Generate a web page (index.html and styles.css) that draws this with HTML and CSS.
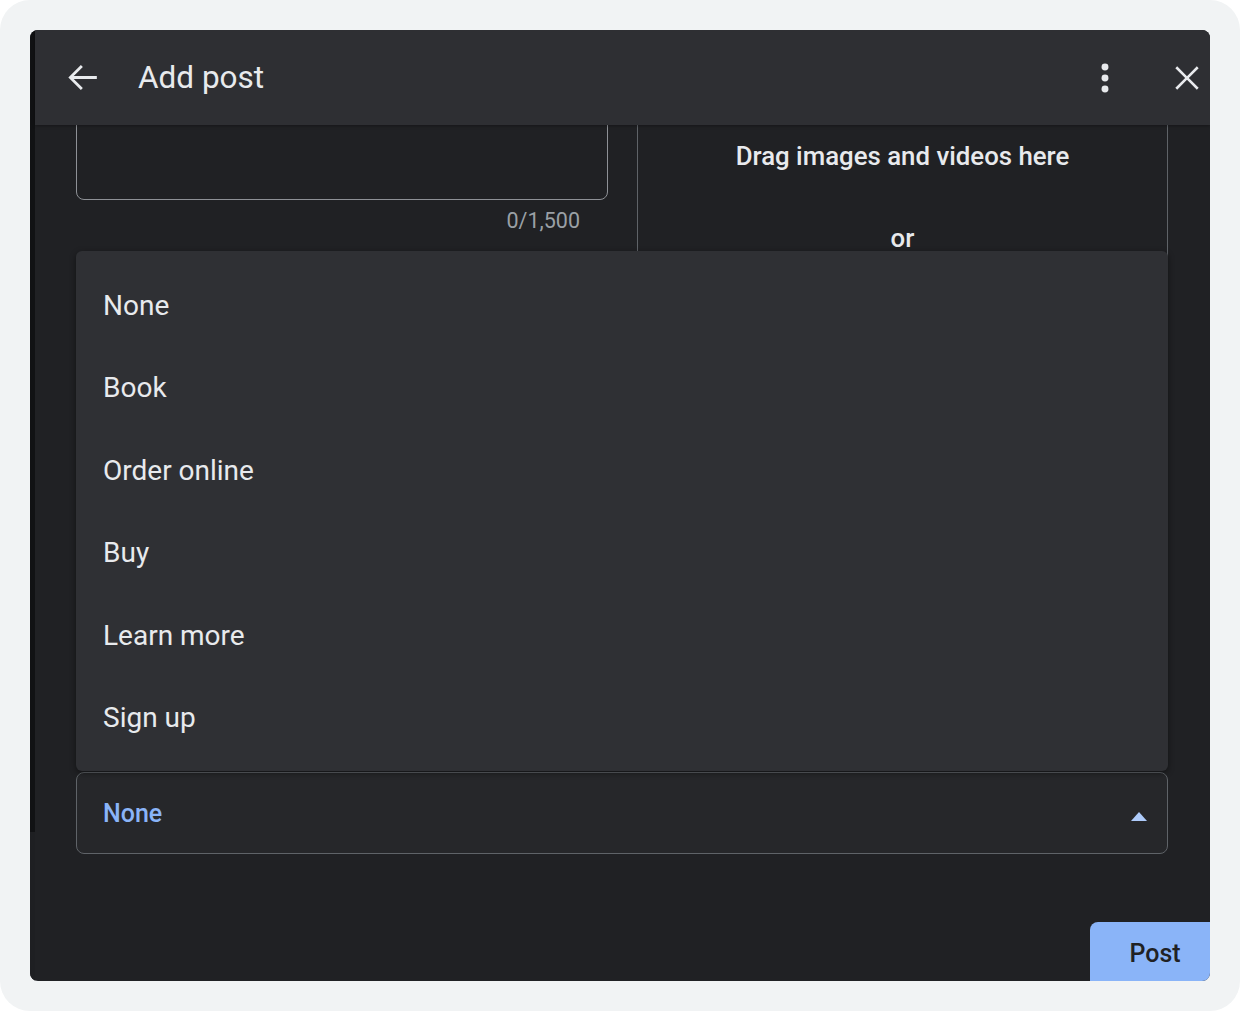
FILE: index.html
```html
<!DOCTYPE html>
<html lang="en">
    <head>
        <meta charset="UTF-8">
        <meta name="viewport" content="width=device-width, initial-scale=1.0">
        <title>Add post</title>
        <link rel="stylesheet" href="styles.css">
    </head>
    <body>
        <div class="frame">
            <div class="screen">
                <div class="page-edge"></div>

                <div class="dialog">
                    <div class="header">
                        <button class="icon-btn back" aria-label="Back">
                            <svg viewBox="0 0 24 24" width="43" height="43"><path d="M20 11.2H7.1l5.1-5.1-1.1-1.1L4.1 12l7 7 1.1-1.1-5.1-5.1H20z"/></svg>
                        </button>
                        <h1>Add post</h1>
                        <button class="icon-btn more" aria-label="More">
                            <svg viewBox="0 0 24 24" width="44" height="44"><circle cx="12" cy="6" r="1.9"/><circle cx="12" cy="12" r="1.9"/><circle cx="12" cy="18" r="1.9"/></svg>
                        </button>
                        <button class="icon-btn close" aria-label="Close">
                            <svg viewBox="0 0 24 24" width="40" height="40"><path d="M19 6.1L17.9 5 12 10.9 6.1 5 5 6.1 10.9 12 5 17.9 6.1 19 12 13.1 17.9 19 19 17.9 13.1 12z"/></svg>
                        </button>
                    </div>

                    <div class="content">
                        <div class="top-row">
                            <div class="compose">
                                <div class="textarea"></div>
                                <div class="counter">0/1,500</div>
                            </div>
                            <div class="upload">
                                <p class="drag">Drag images and videos here</p>
                                <p class="or">or</p>
                            </div>
                        </div>

                        <div class="select">
                            <span class="select-value">None</span>
                            <span class="caret"></span>
                        </div>

                        <div class="footer">
                            <button class="post-btn">Post</button>
                        </div>

                        <!-- open action menu -->
                        <ul class="menu">
                            <li>None</li>
                            <li>Book</li>
                            <li>Order online</li>
                            <li>Buy</li>
                            <li>Learn more</li>
                            <li>Sign up</li>
                        </ul>
                    </div>
                </div>
            </div>
        </div>
    </body>
</html>
```

FILE: styles.css
```css
body {
    margin: 0;
    background: #ffffff;
    font-family: 'Roboto', 'Noto Sans', sans-serif;
}

.frame {
    width: 1240px;
    height: 1011px;
    padding: 30px;
    box-sizing: border-box;
    background: #f1f3f4;
    border-radius: 30px;
}

.screen {
    display: flex;
    height: 951px;
    border-radius: 8px;
    overflow: hidden;
    background: #202124;
}

.page-edge {
    width: 5px;
    flex-shrink: 0;
    background: linear-gradient(#111214 0, #111214 802px, #1e1f22 802px);
}

.dialog {
    flex: 1;
    display: flex;
    flex-direction: column;
}

/* Header */
.header {
    position: relative;
    z-index: 2;
    height: 95px;
    flex-shrink: 0;
    display: flex;
    align-items: center;
    padding: 0 3px 0 26px;
    background: #2e2f33;
    box-shadow: 0 1px 3px rgba(0, 0, 0, 0.35);
    color: #e8eaed;
}

.header h1 {
    flex: 1;
    margin: 0 0 0 34px;
    font-size: 31.5px;
    font-weight: 400;
    color: #e8eaed;
}

.icon-btn {
    display: flex;
    padding: 0;
    border: none;
    background: none;
    fill: #e8eaed;
    cursor: pointer;
}

.more {
    margin-right: 40px;
}

/* Content */
.content {
    position: relative;
    flex: 1;
    display: flex;
    flex-direction: column;
    padding: 0 42px 0 41px;
    overflow: hidden;
}

.top-row {
    display: flex;
    gap: 29px;
    height: 647px;
    flex-shrink: 0;
}

.compose {
    width: 532px;
}

.textarea {
    height: 140px;
    margin-top: -65px;
    border: 1px solid #8e9196;
    border-radius: 8px;
    box-sizing: border-box;
}

.counter {
    margin-top: 9px;
    padding-right: 28px;
    text-align: right;
    font-size: 21.5px;
    line-height: 24px;
    color: #9aa0a6;
}

.upload {
    width: 531px;
    height: 600px;
    margin-top: -65px;
    padding-top: 81px;
    border: 1px solid #5f6368;
    border-radius: 8px;
    box-sizing: border-box;
    text-align: center;
    color: #e8eaed;
    font-size: 25.8px;
    font-weight: 500;
    line-height: 28px;
}

.upload p {
    margin: 0;
}

.upload .or {
    margin-top: 54px;
}

/* Select field */
.select {
    height: 82px;
    flex-shrink: 0;
    display: flex;
    align-items: center;
    justify-content: space-between;
    padding: 0 20px 0 26px;
    border: 1px solid #5f6368;
    border-radius: 8px;
    box-sizing: border-box;
    background: #26272a;
}

.select-value {
    font-size: 25px;
    font-weight: 500;
    color: #8ab4f8;
}

.caret {
    margin-top: 7px;
    border-left: 8.5px solid transparent;
    border-right: 8.5px solid transparent;
    border-bottom: 9px solid #aecbfa;
}

/* Footer */
.footer {
    margin-top: auto;
    margin-right: -42px;
    display: flex;
    justify-content: flex-end;
}

.post-btn {
    width: 120px;
    height: 59px;
    padding: 4px 0 0 10px;
    border: none;
    border-radius: 8px 0 0 0;
    background: #8ab4f8;
    color: #202124;
    font-family: inherit;
    font-size: 25px;
    font-weight: 500;
    cursor: pointer;
}

/* Menu */
.menu {
    position: absolute;
    top: 126px;
    left: 41px;
    right: 42px;
    z-index: 1;
    margin: 0;
    padding: 14px 0 12px;
    list-style: none;
    background: #2f3034;
    border-radius: 6px;
    box-shadow: 0 2px 6px rgba(0, 0, 0, 0.45);
}

.menu li {
    height: 82.4px;
    line-height: 82.4px;
    padding-left: 27px;
    font-size: 28px;
    color: #e8eaed;
}
```
